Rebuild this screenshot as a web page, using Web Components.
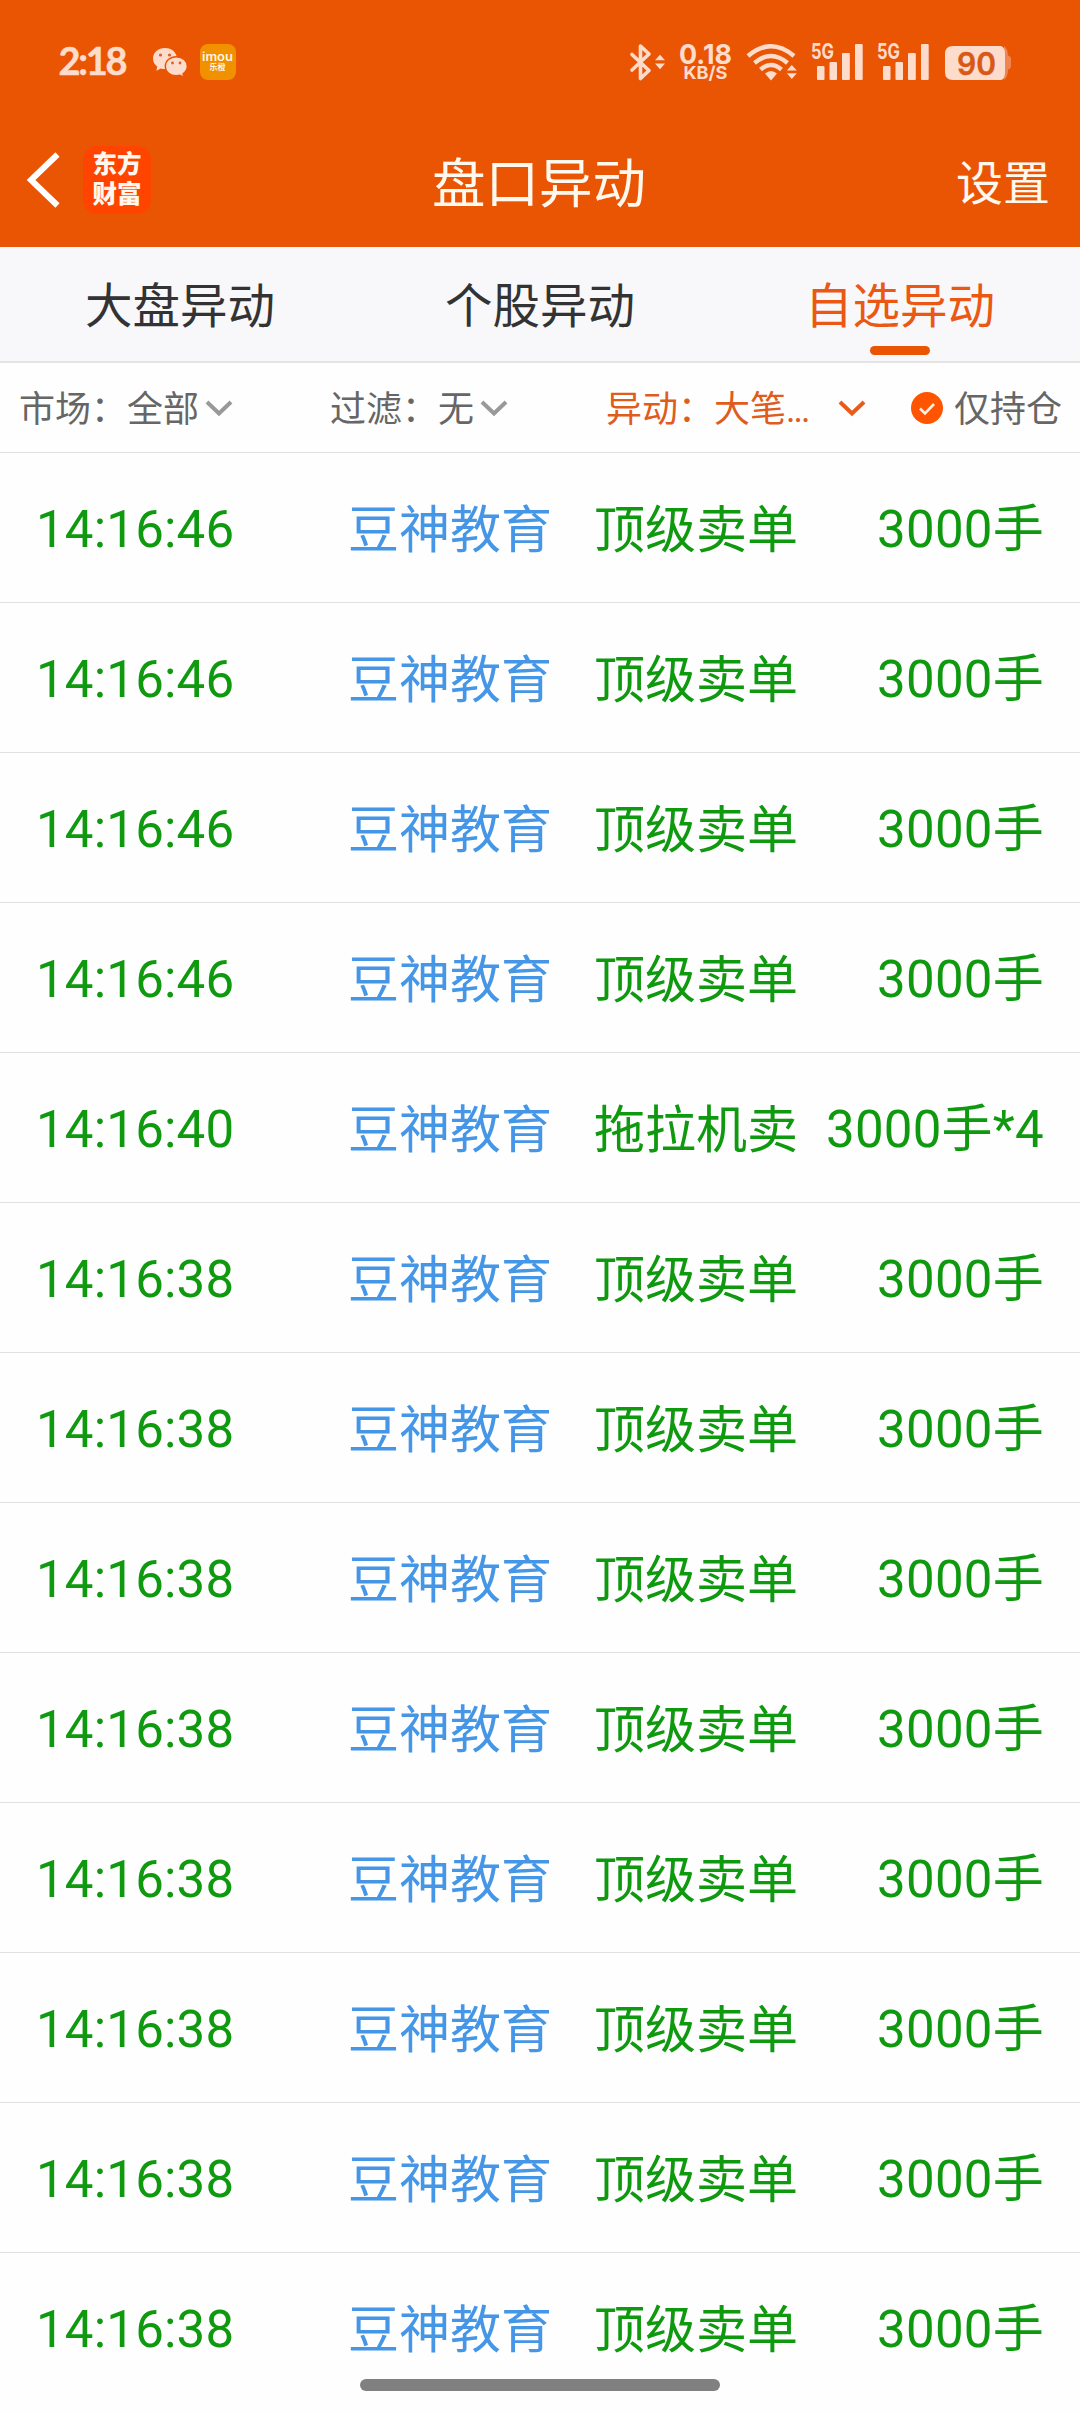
<!DOCTYPE html>
<html lang="zh-CN">
<head>
<meta charset="utf-8">
<title>盘口异动</title>
<style>
html,body{margin:0;padding:0;background:#fefefe}
body{width:1080px;height:2412px;overflow:hidden;font-family:Roboto,"Noto Sans CJK SC",sans-serif}
</style>
</head>
<body>
<alert-app></alert-app>
<script>
const define = (name, html, init) => {
  const tpl = document.createElement('template');
  tpl.innerHTML = html;
  customElements.define(name, class extends HTMLElement {
    constructor() {
      super();
      this.attachShadow({mode: 'open'}).append(tpl.content.cloneNode(true));
    }
    connectedCallback() { if (init) init(this, this.shadowRoot); }
  });
};

define('status-bar', `
<style>
:host{display:flex;height:110px;padding-left:52px;fill:#fddccc;color:#fddccc}
svg{display:block;flex:none;height:110px}
.space{flex:1}
.signals{display:flex;padding-right:65px}
</style>
<svg width="88" viewBox="52 0 88 110"><text x="58.500" y="75" font-family="Lato" font-weight="700" font-size="38" textLength="69" stroke="#fddccc" stroke-width=".5">2:18</text></svg>
<svg width="56" viewBox="140 0 56 110">
  <path d="M165 48c-6.800 0-12 4.600-12 10.500 0 3.400 1.800 6.300 4.300 8.200l-1 4 4.500-2.300c1.400.4 2.800.5 4.200.5 6.800 0 12-4.600 12-10.400S171.800 48 165 48z"/>
  <path d="M176.300 56.800c-6.400 0-11 4.200-11 9.500s4.600 9.500 11 9.500c1.300 0 2.500-.2 3.700-.5l4 2-1-3.500c2.800-2 4.300-4.600 4.300-7.500 0-5.300-4.600-9.500-11-9.500z" stroke="#ea5504" stroke-width="1.400"/>
  <g fill="#d5622c"><circle cx="160.500" cy="55" r="1.600"/><circle cx="169.500" cy="55" r="1.600"/><circle cx="172.500" cy="63" r="1.400"/><circle cx="180" cy="63" r="1.400"/></g>
</svg>
<svg width="44" viewBox="196 0 44 110">
  <rect x="200" y="44" width="36" height="36" rx="8" fill="#f19100"/>
  <text x="202" y="61" font-family="Inter" font-weight="600" font-size="11.500" textLength="31" lengthAdjust="spacingAndGlyphs" fill="#fff5e4">imou</text>
  <text x="209.500" y="69.500" font-family="Noto Sans CJK SC" font-weight="700" font-size="8" fill="#fff5e4">乐橙</text>
</svg>
<div class="space"></div>
<div class="signals">
<svg width="44" viewBox="628 0 44 110">
  <path d="M632 54.500l17 16-8.500 8V46l8.500 8-17 16" fill="none" stroke="#fddccc" stroke-width="3.600" stroke-linejoin="round" stroke-linecap="round"/>
  <path d="M655 60.300l5-5.600 5 5.600zM655 63.600l5 5.600 5-5.600z"/>
</svg>
<svg width="66" viewBox="672 0 66 110" font-family="Inter" font-weight="700">
  <text x="679" y="63.800" font-size="27.500" textLength="53" lengthAdjust="spacingAndGlyphs">0.18</text>
  <text x="683.500" y="79.200" font-size="17.800" textLength="44" lengthAdjust="spacingAndGlyphs">KB/S</text>
</svg>
<svg width="68" viewBox="738 0 68 110">
  <g fill="none" stroke="#fddccc" stroke-width="4.500"><path d="M748 56q23-19.500 46 0"/><path d="M754.500 63q16.500-14 33 0"/><path d="M760.500 69.500q10.500-9 21 0"/></g>
  <path d="M765 73.500q6-5 12 0l-6 7zM786.800 70.500l5-5.600 5 5.600zM786.800 73.300l5 5.600 5-5.600z"/>
</svg>
<svg width="66" viewBox="806 0 66 110">
  <text x="811" y="59" font-family="Inter" font-weight="700" font-size="21.500" textLength="23" lengthAdjust="spacingAndGlyphs">5G</text>
  <rect x="817" y="66" width="7.500" height="14" rx="1"/><rect x="829.500" y="62" width="7.500" height="18" rx="1"/><rect x="842" y="53" width="7.800" height="27" rx="1"/><rect x="855" y="44" width="7.700" height="36" rx="1"/>
</svg>
<svg width="66" viewBox="872 0 66 110">
  <text x="877" y="59" font-family="Inter" font-weight="700" font-size="21.500" textLength="23" lengthAdjust="spacingAndGlyphs">5G</text>
  <rect x="883" y="66" width="7.500" height="14" rx="1"/><rect x="895.500" y="62" width="7.500" height="18" rx="1"/><rect x="908" y="53" width="7.800" height="27" rx="1"/><rect x="921" y="44" width="7.700" height="36" rx="1"/>
</svg>
<svg width="77" viewBox="938 0 77 110">
  <path d="M1004 46q4 3 4 9.500c2 .5 3 1.500 3 3.500v7c0 2-1 3-3 3.500q0 7-4 10.500z" fill="#ef8550"/>
  <path d="M953 46h48q4 1 4 8v18q0 7-4 8h-48q-8 0-8-8v-18q0-8 8-8z"/>
  <text x="957" y="74.500" font-family="Inter" font-weight="600" font-size="31" textLength="39" lengthAdjust="spacingAndGlyphs" fill="#d85818" stroke="#d85818" stroke-width=".4">90</text>
</svg>
</div>`);

define('nav-bar', `
<style>
:host{display:grid;grid-template-columns:1fr auto 1fr;align-items:center;height:137px;padding:11px 30px 0 28px;box-sizing:border-box;color:#fff8ee}
.left{display:flex;align-items:center;gap:21px;padding-bottom:8px;margin-left:-4px}
.back{display:block}
.logo{display:flex;flex-direction:column;align-items:center;justify-content:center;width:68px;height:68px;border-radius:14px;background:#ff4400;font-size:24.500px;line-height:30px;font-weight:900;box-sizing:border-box}
.title{font-size:53.500px;line-height:80px;padding-top:1px}
.action{justify-self:end;font-size:47px;line-height:70px;padding-bottom:1px}
</style>
<div class="left">
<svg class="back" width="38" height="60" viewBox="0 0 38 60"><path d="M33.500 4.500L7 30l26.500 25.500" fill="none" stroke="#fff" stroke-width="6"/></svg>
<div class="logo"><span>东方</span><span>财富</span></div>
</div>
<div class="title"><slot></slot></div>
<div class="action"><slot name="action"></slot></div>`);

define('tab-item', `
<style>
:host{display:flex;flex:1;flex-direction:column;align-items:center;justify-content:flex-end;font-size:47.500px;color:#333;padding-bottom:6px}
.label{line-height:70px;padding-bottom:4px}
.bar{width:60px;height:9px;border-radius:4.500px}
:host([active]){color:#ea5814}
:host([active]) .bar{background:#ea5504}
</style>
<span class="label"><slot></slot></span><div class="bar"></div>`);

define('tab-strip', `
<style>:host{display:flex;height:116px;box-sizing:border-box;background:#f8f8fa;border-bottom:2px solid #e4e4e4}</style>
<slot></slot>`);

define('filter-item', `
<style>
:host{display:flex;align-items:center;color:#666;--arrow:#999;white-space:nowrap}
:host([active]){color:#e05c1c;--arrow:#ea5a18}
span{padding-top:4px}
svg{display:block;margin-left:var(--gap,6px)}
</style>
<span><slot></slot></span>
<svg width="28" height="18" viewBox="0 0 28 18"><path d="M2 3l12 11.500L26 3" fill="none" stroke="var(--arrow)" stroke-width="4"/></svg>`);

define('check-option', `
<style>
:host{display:flex;align-items:center;gap:11px;color:#666}
svg{display:block}
span{padding-top:4px}
</style>
<svg width="32" height="32" viewBox="0 0 32 32"><circle cx="16" cy="16" r="16" fill="#ff5500"/><path d="M9 16.500l5 5 9-9.500" fill="none" stroke="#ffefe0" stroke-width="2.600"/></svg>
<span><slot></slot></span>`);

define('filter-bar', `
<style>
:host{display:grid;grid-template-columns:311px 276px 305px auto;align-items:center;height:90px;box-sizing:border-box;padding-left:19px;font-size:36px;line-height:52px;border-bottom:1px solid #e1e1e1}
</style>
<slot></slot>`);

define('alert-row', `
<style>
:host{display:grid;grid-template-columns:312px 246px 1fr;align-items:center;height:150px;box-sizing:border-box;padding:5px 36px 0;border-bottom:1px solid #e1e1e1;font-size:51px;line-height:74px;color:#0e990e;white-space:nowrap}
:host(:last-of-type){border-bottom-color:transparent}
.time{letter-spacing:.2px}
.name,.kind{padding-top:2px}
.name{color:#4596e6}
.detail{display:flex;align-items:center;justify-content:space-between}
.amount{letter-spacing:.25px}
</style>
<span class="time"></span><span class="name"></span>
<div class="detail"><span class="kind"></span><span class="amount"></span></div>`,
(el, root) => {
  for (const key of ['time', 'name', 'kind', 'amount'])
    root.querySelector('.' + key).textContent = el.getAttribute(key);
});

define('alert-list', `<style>:host{display:block}</style><div></div>`, (el, root) => {
  const times = [...Array(4).fill('14:16:46'), '14:16:40', ...Array(8).fill('14:16:38')];
  for (const time of times) {
    const row = document.createElement('alert-row');
    const tractor = time === '14:16:40';
    row.setAttribute('time', time);
    row.setAttribute('name', '豆神教育');
    row.setAttribute('kind', tractor ? '拖拉机卖' : '顶级卖单');
    row.setAttribute('amount', tractor ? '3000手*4' : '3000手');
    root.querySelector('div').append(row);
  }
});

define('home-indicator', `
<style>:host{display:block;position:absolute;left:360px;bottom:21px;width:360px;height:12px;border-radius:6px;background:#808080}</style>`);

define('alert-app', `
<style>
:host{display:block;position:relative;width:1080px;height:2412px;overflow:hidden}
header{background:#ea5504}
.dots{letter-spacing:-2px}
</style>
<header>
  <status-bar></status-bar>
  <nav-bar>盘口异动<span slot="action">设置</span></nav-bar>
</header>
<tab-strip><tab-item>大盘异动</tab-item><tab-item>个股异动</tab-item><tab-item active>自选异动</tab-item></tab-strip>
<filter-bar>
  <filter-item>市场：全部</filter-item>
  <filter-item>过滤：无</filter-item>
  <filter-item active style="--gap:29px">异动：大笔<span class="dots">...</span></filter-item>
  <check-option>仅持仓</check-option>
</filter-bar>
<alert-list></alert-list>
<home-indicator></home-indicator>`);
</script>
</body>
</html>
